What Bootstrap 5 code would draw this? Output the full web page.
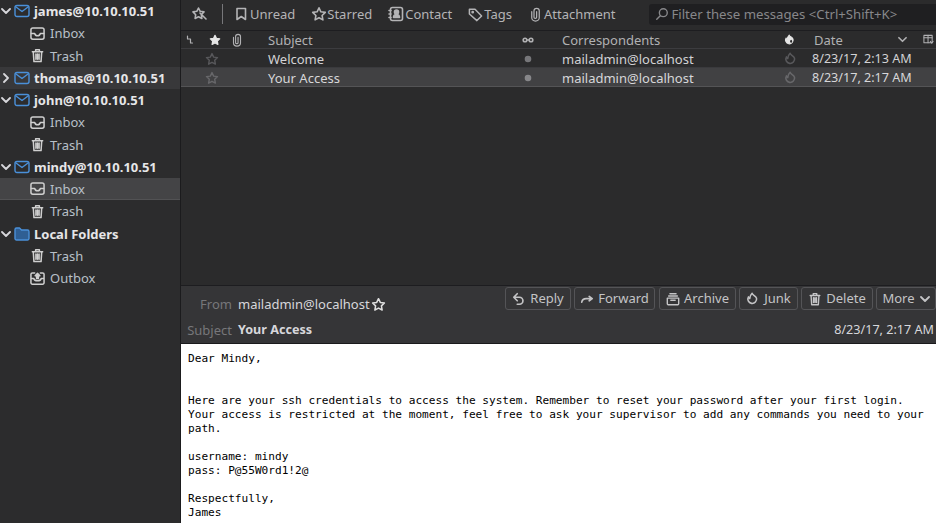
<!DOCTYPE html>
<html lang="en">
<head>
<meta charset="utf-8">
<title>Mail</title>
<link href="https://cdn.jsdelivr.net/npm/bootstrap@5.3.0/dist/css/bootstrap.min.css" rel="stylesheet">
<style>
html,body{height:100%;overflow:hidden}
body{background:#2b2b2c;color:#d7d7db;font-family:"Noto Sans","Liberation Sans",sans-serif;font-size:13px;line-height:18px}
svg{display:block;flex:none;fill:none;stroke:currentColor;stroke-width:1.6;stroke-linecap:round;stroke-linejoin:round}
.app-shell{width:936px;height:523px}
.side-pane{width:181px;flex:none;background:#2c2c2d;border-right:1px solid #1b1b1d}
.tree-row{height:22.25px;padding-left:1px}
.tree-row.sub{padding-left:30px;color:#b8c0c8}
.tree-row.acct{font-weight:700;color:#e6e6e8}
.tree-row.hov{background:#38383a}
.tree-row.sel{background:#444446;border-bottom:1px solid #525254}
.tw{width:10px;margin-right:3px;color:#d7d7db}
.ico-b{color:#4a90d9;margin-right:4px;stroke-width:1.4}
.ico-g{color:#cfcfcf;margin-right:5px}
.main-pane{min-width:0}
.tool-bar{height:31px;background:#2b2b2c;border-bottom:1px solid #1d1d20;padding:0 0 2px 11px;color:#b4b4b6}
.tool-sep{width:1px;height:20px;background:#77777a;margin:0 11px 0 14px;flex:none}
.tool-item{margin-right:16px;flex:none}
.tool-item.last{margin-right:34px}
.tool-item.gap1 svg{margin-right:1px}
.tool-item.gap2 svg{margin-right:2px}
.filter-box{width:287px;height:21px;background:#1f1f21;border-radius:3px 0 0 3px;padding-left:6px;color:#87878a;white-space:nowrap;overflow:hidden;flex:none;font-size:13.2px}
.filter-box svg{margin-right:2px}
.col-head,.msg-row{white-space:nowrap}
.col-head{height:18px;background:#2b2b2c;border-bottom:1px solid #3c3c3f;color:#b1b1b3}
.msg-row{height:19px;background:#2b2b2c;border-bottom:1px solid #3a3a3d;color:#d2d2d4;padding-top:1px}
.msg-row.cur{background:#414143;border-bottom:1px solid #545456;color:#d7d7d9}
.c1{width:24px;padding-left:5px}.c2{width:25px}.c3{width:38px}.c4{width:254px}.c5{width:40px}.c6{width:222px}.c7{width:28px}.c8{width:95px}
.msg-row .c8,.date-txt{font-size:12.6px}
.date-head{padding-left:2px}
.col-pick{margin-right:2px}
.c5 .dot{margin-left:2px}
.head-zone{height:59px;flex:none;background:#353537;border-top:1px solid #1d1d20;border-bottom:1px solid #1a1a1c}
.head-top{height:36px}
.from-star{margin-left:1px;color:#e0e0e0}
.sub-line{height:16px;padding-left:6px;padding-right:2px}
.sub-line strong{font-size:12.6px}
.head-top .fld-label{margin-left:6px}
.fld-label{color:#77777a;margin-right:6px;width:45px;text-align:right;flex:none}
.head-btns{align-self:flex-start;margin-top:1px}
.head-btn{height:23px;border:1px solid #545457;border-radius:3px;color:#c4c4c6;padding:0;margin-left:3px;background:transparent;font-size:13px;line-height:21px;flex:none}
.head-btn svg{margin-right:4px}
.b-reply{width:66px}.b-forward{width:81px}.b-archive{width:77px;margin-left:4px}.b-junk{width:59px}.b-delete{width:72px}.b-more{width:60px}
.b-more svg{margin:0 0 0 5px}
.body-msg{background:#fff;color:#000;font-family:"DejaVu Sans Mono","Liberation Mono",monospace;font-size:11.12px;line-height:14px;padding:8px 7px 0;margin:0;white-space:pre-wrap;overflow:hidden;height:179px;flex:none}
</style>
</head>
<body>
<svg width="0" height="0" class="position-absolute">
<defs>
<symbol id="chev-d" viewBox="0 0 10 10"><path d="M1 3l4 4 4-4" stroke-width="1.8"/></symbol>
<symbol id="chev-r" viewBox="0 0 10 10"><path d="M3 1l4 4-4 4" stroke-width="1.8"/></symbol>
<symbol id="mail" viewBox="0 0 16 16"><rect x="1" y="2.500" width="14" height="11" rx="2"/><path d="M2 4l6 4.500L14 4"/></symbol>
<symbol id="inbox" viewBox="0 0 16 16"><rect x="1" y="2" width="14" height="12" rx="2"/><path d="M1.500 8H5c.5 2 1.500 2.500 3 2.500S10.500 10 11 8h3.500"/></symbol>
<symbol id="trash" viewBox="0 0 16 16"><path d="M2.500 4h11M6 4V1.800h4V4M3.500 4l.7 10.500h7.600L12.500 4M6.300 6.500v5.500M8 6.500v5.500M9.700 6.500v5.500"/></symbol>
<symbol id="outbox" viewBox="0 0 16 16"><path d="M5 2H2.500A1.500 1.500 0 0 0 1 3.500v9A1.500 1.500 0 0 0 2.500 14h11a1.500 1.500 0 0 0 1.500-1.500v-9A1.500 1.500 0 0 0 13.500 2H11M1.500 8H4c.5 2 2 2.500 4 2.500S11.500 10 12 8h2.500"/><path d="M5.500 5L8 2.500 10.500 5H9v3H7V5z" fill="currentColor"/></symbol>
<symbol id="folder" viewBox="0 0 16 16"><path d="M1 3.500A1.500 1.500 0 0 1 2.500 2h3l2 2h6A1.500 1.500 0 0 1 15 5.500v7a1.500 1.500 0 0 1-1.500 1.500h-11A1.500 1.500 0 0 1 1 12.500z" fill="#2f5f94"/></symbol>
<symbol id="star" viewBox="0 0 16 16"><path d="M8 1.800l1.900 4 4.400.6-3.200 3.100.8 4.400L8 11.800l-3.900 2.100.8-4.400-3.200-3.100 4.400-.6z"/></symbol>
<symbol id="pin" viewBox="0 0 16 16"><path d="M6.500 2l1.700 3.300 3.800.6-2.700 2.800.6 3.800-3.400-1.700-3.400 1.700.6-3.800L1 5.900l3.800-.6zM8 7l6 6"/></symbol>
<symbol id="bookmark" viewBox="0 0 14 14"><path d="M3 1.500h8.500v11L7.250 9.500 3 12.500z"/></symbol>
<symbol id="contact" viewBox="0 0 16 16"><rect x="2.500" y="1.500" width="12" height="13" rx="2"/><path d="M1 4.500h2M1 8h2M1 11.500h2"/><circle cx="8.500" cy="6" r="2" fill="currentColor"/><path d="M5.500 11.500c0-2 1.500-3 3-3s3 1 3 3z" fill="currentColor"/></symbol>
<symbol id="tag" viewBox="0 0 16 16"><path d="M1.500 2.500h6l7 7-5 5-8-7z"/><circle cx="5" cy="5.500" r=".7"/></symbol>
<symbol id="clip" viewBox="0 0 16 16"><path d="M4 5v6.500a4 3.500 0 0 0 8 0V4a2.800 2.500 0 0 0-5.600 0v7a1.400 1.200 0 0 0 2.800 0V5" stroke-width="1.300"/></symbol>
<symbol id="search" viewBox="0 0 16 16"><circle cx="9.500" cy="6.500" r="4.500"/><path d="M6 10l-4 4"/></symbol>
<symbol id="thread" viewBox="0 0 8 10"><path d="M1.500 1v3h3v4h2" stroke-width="1.200"/></symbol>
<symbol id="star-f" viewBox="0 0 16 16"><path d="M8 1.800l1.900 4 4.400.6-3.200 3.100.8 4.400L8 11.800l-3.900 2.100.8-4.400-3.200-3.100 4.400-.6z" fill="currentColor"/></symbol>
<symbol id="flame" viewBox="0 0 16 16"><path d="M7 1.500c0 2 4 2.500 5 5.500a5 5 0 1 1-9.200-1.500c.2 1 .7 1.700 1.500 2C4.300 5.500 5.500 3 7 1.500z" stroke-width="1.800"/></symbol>
<symbol id="flame-f" viewBox="0 0 16 16"><path d="M7 1.500c0 2 4 2.500 5 5.500a5 5 0 1 1-9.200-1.500c.2 1 .7 1.700 1.500 2C4.300 5.500 5.500 3 7 1.500z" fill="currentColor"/><ellipse cx="9.500" cy="9.500" rx="1.300" ry="2" fill="#2b2b2c" stroke="none"/></symbol>
<symbol id="glasses" viewBox="0 0 12 8"><circle cx="3" cy="4" r="1.800"/><circle cx="9" cy="4" r="1.800"/><path d="M4.800 4h2.400"/></symbol>
<symbol id="cols" viewBox="0 0 12 12"><rect x="1" y="1.500" width="9" height="8" stroke-width="1.100"/><path d="M1 4h9M5.500 1.500v8M8 8l1.500 2L11 8" stroke-width="1.100"/></symbol>
<symbol id="reply" viewBox="0 0 16 16"><path d="M6 2L2 6l4 4M2 6h6.500a4 4 0 0 1 0 8H6" stroke-width="1.900"/></symbol>
<symbol id="forward" viewBox="0 0 16 16"><path d="M2 11.500c.5-2.500 2.500-4 5-4h6.500M10.500 5l3.500 2.500-3.500 2.500" stroke-width="1.900"/></symbol>
<symbol id="archive" viewBox="0 0 16 16"><path d="M4.500 2h7M3 4.500h10M1.500 7h13v6.500a1 1 0 0 1-1 1h-11a1 1 0 0 1-1-1zM5.500 9.500h5"/></symbol>
</defs>
</svg>
<div class="app-shell d-flex">
  <nav class="side-pane d-flex flex-column">
    <div class="tree-row acct d-flex align-items-center"><svg class="tw" width="10" height="10"><use href="#chev-d"/></svg><svg class="ico-b" width="16" height="16"><use href="#mail"/></svg><span>james@10.10.10.51</span></div>
    <div class="tree-row sub d-flex align-items-center"><svg class="ico-g" width="15" height="15"><use href="#inbox"/></svg><span>Inbox</span></div>
    <div class="tree-row sub d-flex align-items-center"><svg class="ico-g" width="15" height="15"><use href="#trash"/></svg><span>Trash</span></div>
    <div class="tree-row acct hov d-flex align-items-center"><svg class="tw" width="10" height="10"><use href="#chev-r"/></svg><svg class="ico-b" width="16" height="16"><use href="#mail"/></svg><span>thomas@10.10.10.51</span></div>
    <div class="tree-row acct d-flex align-items-center"><svg class="tw" width="10" height="10"><use href="#chev-d"/></svg><svg class="ico-b" width="16" height="16"><use href="#mail"/></svg><span>john@10.10.10.51</span></div>
    <div class="tree-row sub d-flex align-items-center"><svg class="ico-g" width="15" height="15"><use href="#inbox"/></svg><span>Inbox</span></div>
    <div class="tree-row sub d-flex align-items-center"><svg class="ico-g" width="15" height="15"><use href="#trash"/></svg><span>Trash</span></div>
    <div class="tree-row acct d-flex align-items-center"><svg class="tw" width="10" height="10"><use href="#chev-d"/></svg><svg class="ico-b" width="16" height="16"><use href="#mail"/></svg><span>mindy@10.10.10.51</span></div>
    <div class="tree-row sub sel d-flex align-items-center"><svg class="ico-g" width="15" height="15"><use href="#inbox"/></svg><span>Inbox</span></div>
    <div class="tree-row sub d-flex align-items-center"><svg class="ico-g" width="15" height="15"><use href="#trash"/></svg><span>Trash</span></div>
    <div class="tree-row acct d-flex align-items-center"><svg class="tw" width="10" height="10"><use href="#chev-d"/></svg><svg class="ico-b" width="16" height="16"><use href="#folder"/></svg><span>Local Folders</span></div>
    <div class="tree-row sub d-flex align-items-center"><svg class="ico-g" width="15" height="15"><use href="#trash"/></svg><span>Trash</span></div>
    <div class="tree-row sub d-flex align-items-center"><svg class="ico-g" width="15" height="15"><use href="#outbox"/></svg><span>Outbox</span></div>
  </nav>
  <main class="main-pane flex-grow-1 d-flex flex-column">
    <div class="tool-bar d-flex align-items-center">
      <svg width="16" height="16"><use href="#pin"/></svg>
      <span class="tool-sep"></span>
      <div class="tool-item gap2 d-flex align-items-center"><svg width="14" height="14"><use href="#bookmark"/></svg>Unread</div>
      <div class="tool-item d-flex align-items-center"><svg width="16" height="16"><use href="#star"/></svg>Starred</div>
      <div class="tool-item gap1 d-flex align-items-center"><svg width="16" height="16"><use href="#contact"/></svg>Contact</div>
      <div class="tool-item gap1 d-flex align-items-center"><svg width="15" height="15"><use href="#tag"/></svg>Tags</div>
      <div class="tool-item last gap1 d-flex align-items-center"><svg width="15" height="15"><use href="#clip"/></svg>Attachment</div>
      <div class="filter-box d-flex align-items-center"><svg width="14" height="14"><use href="#search"/></svg>Filter these messages &lt;Ctrl+Shift+K&gt;</div>
    </div>
    <div class="col-head d-flex align-items-center">
      <div class="c1"><svg width="8" height="10"><use href="#thread"/></svg></div>
      <div class="c2"><svg class="ms-1" width="12" height="12" style="color:#e6e6e6"><use href="#star-f"/></svg></div>
      <div class="c3"><svg width="14" height="14"><use href="#clip"/></svg></div>
      <div class="c4">Subject</div>
      <div class="c5"><svg width="12" height="8"><use href="#glasses"/></svg></div>
      <div class="c6">Correspondents</div>
      <div class="c7"><svg width="12" height="12" style="color:#e6e6e6"><use href="#flame-f"/></svg></div>
      <div class="c8 d-flex align-items-center"><span class="flex-grow-1 date-head">Date</span><svg width="9" height="9"><use href="#chev-d"/></svg></div>
      <svg class="col-pick ms-auto" width="11" height="11"><use href="#cols"/></svg>
    </div>
    <div class="msg-row d-flex align-items-center">
      <div class="c1"></div><div class="c2"><svg width="14" height="14" style="color:#58585b"><use href="#star"/></svg></div><div class="c3"></div>
      <div class="c4">Welcome</div>
      <div class="c5"><svg class="dot" width="8" height="8" style="color:#77777a"><circle cx="4" cy="4" r="2.500" fill="currentColor"/></svg></div>
      <div class="c6">mailadmin@localhost</div>
      <div class="c7"><svg width="14" height="14" style="color:#58585b"><use href="#flame"/></svg></div>
      <div class="c8">8/23/17, 2:13 AM</div>
    </div>
    <div class="msg-row cur d-flex align-items-center">
      <div class="c1"></div><div class="c2"><svg width="14" height="14" style="color:#67676a"><use href="#star"/></svg></div><div class="c3"></div>
      <div class="c4">Your Access</div>
      <div class="c5"><svg class="dot" width="8" height="8" style="color:#87878a"><circle cx="4" cy="4" r="2.500" fill="currentColor"/></svg></div>
      <div class="c6">mailadmin@localhost</div>
      <div class="c7"><svg width="14" height="14" style="color:#67676a"><use href="#flame"/></svg></div>
      <div class="c8">8/23/17, 2:17 AM</div>
    </div>
    <div class="flex-grow-1"></div>
    <section class="head-zone">
      <div class="head-top d-flex align-items-center">
        <span class="fld-label">From</span><span>mailadmin@localhost</span><svg class="from-star" width="15" height="15"><use href="#star"/></svg>
        <div class="head-btns ms-auto d-flex">
          <button class="head-btn b-reply d-flex align-items-center justify-content-center"><svg width="14" height="14"><use href="#reply"/></svg>Reply</button>
          <button class="head-btn b-forward d-flex align-items-center justify-content-center"><svg width="14" height="14"><use href="#forward"/></svg>Forward</button>
          <button class="head-btn b-archive d-flex align-items-center justify-content-center"><svg width="14" height="14"><use href="#archive"/></svg>Archive</button>
          <button class="head-btn b-junk d-flex align-items-center justify-content-center"><svg width="14" height="14"><use href="#flame"/></svg>Junk</button>
          <button class="head-btn b-delete d-flex align-items-center justify-content-center"><svg width="14" height="14"><use href="#trash"/></svg>Delete</button>
          <button class="head-btn b-more d-flex align-items-center justify-content-center">More<svg width="10" height="10"><use href="#chev-d"/></svg></button>
        </div>
      </div>
      <div class="sub-line d-flex align-items-center">
        <span class="fld-label">Subject</span><strong>Your Access</strong>
        <span class="date-txt ms-auto">8/23/17, 2:17 AM</span>
      </div>
    </section>
    <pre class="body-msg">Dear Mindy,


Here are your ssh credentials to access the system. Remember to reset your password after your first login.
Your access is restricted at the moment, feel free to ask your supervisor to add any commands you need to your path.

username: mindy
pass: P@55W0rd1!2@

Respectfully,
James</pre>
  </main>
</div>
<script src="https://cdn.jsdelivr.net/npm/bootstrap@5.3.0/dist/js/bootstrap.bundle.min.js"></script>
</body>
</html>
